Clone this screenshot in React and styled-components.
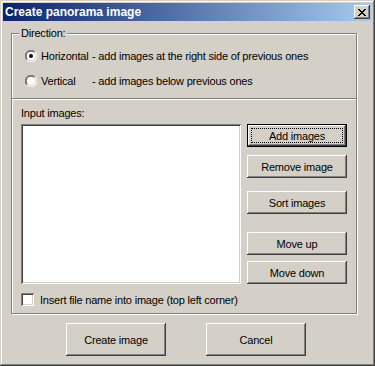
import styled, { createGlobalStyle } from "styled-components";

const GlobalStyle = createGlobalStyle`
  html, body {
    margin: 0;
    padding: 0;
    background: #d4d0c8;
  }
  body {
    font-family: "Liberation Sans", Arial, sans-serif;
    font-size: 11px;
    letter-spacing: -0.2px;
  }
`;

const Window = styled.div`
  width: 375px;
  height: 366px;
  box-sizing: border-box;
  padding: 3px;
  display: flex;
  flex-direction: column;
  background: #d4d0c8;
  color: #000;
  box-shadow: inset -1px -1px #404040, inset 1px 1px #d4d0c8,
    inset -2px -2px #808080, inset 2px 2px #fff;
`;

const TitleBar = styled.div`
  height: 18px;
  display: flex;
  align-items: center;
  justify-content: space-between;
  padding: 0 2px;
  background: linear-gradient(to right, #0a246a, #a6caf0);
`;

const Title = styled.span`
  color: #fff;
  font-weight: bold;
  font-size: 12px;
  letter-spacing: 0;
`;

const CloseButton = styled.button`
  width: 16px;
  height: 14px;
  padding: 0;
  border: none;
  display: flex;
  align-items: center;
  justify-content: center;
  background: #d4d0c8;
  box-shadow: inset -1px -1px #404040, inset 1px 1px #fff,
    inset -2px -2px #808080, inset 2px 2px #d4d0c8;
`;

const Frame = styled.fieldset`
  margin: 6px 0 0 8px;
  padding: 0;
  width: 346px;
  min-width: 0;
  box-sizing: border-box;
  border: 1px solid #808080;
  box-shadow: 1px 1px 0 #fff, inset 1px 1px 0 #fff;
`;

const Legend = styled.legend`
  margin-left: 7px;
  padding: 0 2px;
  line-height: 13px;
  background: #d4d0c8;
`;

const DirectionSection = styled.div`
  display: flex;
  flex-direction: column;
  gap: 9px;
  padding: 8px 0 9px 13px;
`;

const Option = styled.label`
  height: 16px;
  display: flex;
  align-items: center;
  gap: 4px;
`;

const Term = styled.span`
  display: inline-block;
  width: 51px;
`;

const Divider = styled.div`
  border-top: 1px solid #808080;
  border-bottom: 1px solid #fff;
`;

const InputSection = styled.div`
  display: flex;
  flex-direction: column;
  padding: 7px 9px 7px 9px;
`;

const Caption = styled.div`
  line-height: 13px;
  margin-bottom: 4px;
`;

const ListRow = styled.div`
  display: flex;
  gap: 6px;
`;

const ListBox = styled.div`
  width: 222px;
  height: 160px;
  background: #fff;
  box-shadow: inset 1px 1px #808080, inset -1px -1px #fff,
    inset 2px 2px #404040, inset -2px -2px #d4d0c8;
`;

const ButtonColumn = styled.div`
  display: flex;
  flex-direction: column;
`;

const Button = styled.button`
  width: ${(p) => p.$w || 100}px;
  height: ${(p) => p.$h || 23}px;
  margin-top: ${(p) => p.$top || 0}px;
  padding: 0;
  box-sizing: border-box;
  border: ${(p) => (p.$default ? "1px solid #000" : "none")};
  background: #d4d0c8;
  color: #000;
  font: inherit;
  letter-spacing: inherit;
  box-shadow: inset -1px -1px #404040, inset 1px 1px #fff,
    inset -2px -2px #808080, inset 2px 2px #d4d0c8;
  outline: ${(p) => (p.$default ? "1px dotted #000" : "none")};
  outline-offset: -5px;
`;

const CheckRow = styled.label`
  display: flex;
  align-items: center;
  gap: 6px;
  margin-top: 9px;
  height: 13px;
`;

const CheckBox = styled.span`
  width: 13px;
  height: 13px;
  box-sizing: border-box;
  background: #fff;
  box-shadow: inset 1px 1px #808080, inset -1px -1px #fff,
    inset 2px 2px #404040, inset -2px -2px #d4d0c8;
`;

const Footer = styled.div`
  display: flex;
  gap: 40px;
  margin-top: 9px;
  padding-left: 63px;
`;

const CloseIcon = () => (
  <svg width="8" height="7" viewBox="0 0 8 7" shapeRendering="crispEdges">
    <path
      d="M0 0h2v1H0zM6 0h2v1H6zM1 1h2v1H1zM5 1h2v1H5zM2 2h4v1H2zM3 3h2v1H3zM2 4h4v1H2zM1 5h2v1H1zM5 5h2v1H5zM0 6h2v1H0zM6 6h2v1H6z"
      fill="#000"
    />
  </svg>
);

const Radio = ({ checked }) => (
  <svg width="12" height="12" viewBox="0 0 12 12">
    <circle cx="6" cy="6" r="5.5" fill="#fff" />
    <path d="M1.8 10.2A5.5 5.5 0 0 1 10.2 1.8" fill="none" stroke="#808080" />
    <path d="M10.2 1.8A5.5 5.5 0 0 1 1.8 10.2" fill="none" stroke="#fff" />
    <path d="M2.5 9.5A4.5 4.5 0 0 1 9.5 2.5" fill="none" stroke="#404040" />
    <path d="M9.5 2.5A4.5 4.5 0 0 1 2.5 9.5" fill="none" stroke="#d4d0c8" />
    {checked && <circle cx="6" cy="6" r="2" fill="#000" />}
  </svg>
);

export default function App() {
  return (
    <>
      <GlobalStyle />
      <Window>
        <TitleBar>
          <Title>Create panorama image</Title>
          <CloseButton>
            <CloseIcon />
          </CloseButton>
        </TitleBar>

        <Frame>
          <Legend>Direction:</Legend>
          <DirectionSection>
            <Option>
              <Radio checked />
              <span>
                <Term>Horizontal</Term>- add images at the right side of previous ones
              </span>
            </Option>
            <Option>
              <Radio />
              <span>
                <Term>Vertical</Term>- add images below previous ones
              </span>
            </Option>
          </DirectionSection>
          <Divider />
          <InputSection>
            <Caption>Input images:</Caption>
            <ListRow>
              <ListBox />
              <ButtonColumn>
                <Button $default>Add images</Button>
                <Button $top={8}>Remove image</Button>
                <Button $top={13}>Sort images</Button>
                <Button $top={18}>Move up</Button>
                <Button $top={6}>Move down</Button>
              </ButtonColumn>
            </ListRow>
            <CheckRow>
              <CheckBox />
              <span>Insert file name into image (top left corner)</span>
            </CheckRow>
          </InputSection>
        </Frame>

        <Footer>
          <Button $h={33}>Create image</Button>
          <Button $h={33}>Cancel</Button>
        </Footer>
      </Window>
    </>
  );
}
